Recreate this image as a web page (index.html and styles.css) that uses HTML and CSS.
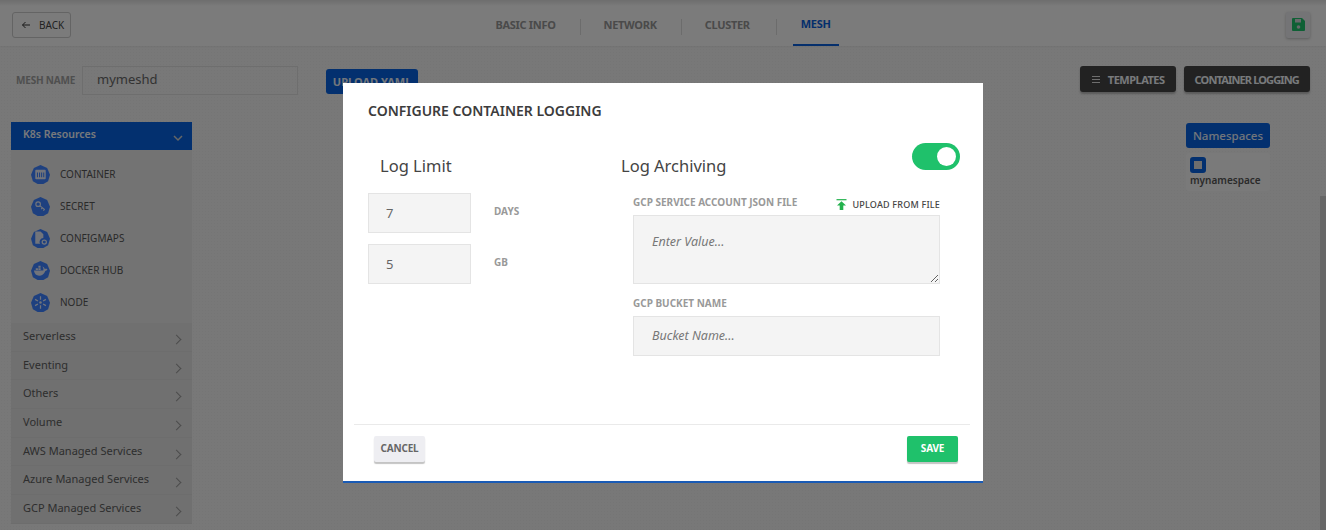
FILE: index.html
```html
<!DOCTYPE html>
<html lang="en">
<head>
    <meta charset="UTF-8">
    <meta name="viewport" content="width=device-width, initial-scale=1.0">
    <title>Configure Container Logging</title>
    <link rel="stylesheet" href="styles.css">
</head>
<body>
    <div class="page">
        <header class="topbar">
            <button class="back-btn">
                <svg width="10" height="10" viewBox="0 0 10 10"><path d="M9 5H1.5M4.5 2 1.5 5l3 3" fill="none" stroke="#333" stroke-width="1"/></svg>
                BACK
            </button>
            <nav class="tabs">
                <span class="tab">BASIC INFO</span>
                <span class="tab">NETWORK</span>
                <span class="tab">CLUSTER</span>
                <span class="tab active">MESH</span>
            </nav>
            <button class="save-icon-btn">
                <svg width="13" height="13" viewBox="0 0 13 13"><path d="M1 0h9l3 3v9a1 1 0 0 1-1 1H1a1 1 0 0 1-1-1V1a1 1 0 0 1 1-1z" fill="#1fc16b"/><rect x="3" y="1" width="6" height="3.5" fill="#cfd3d6"/><circle cx="6.5" cy="9" r="1.8" fill="#cfd3d6"/></svg>
            </button>
        </header>

        <div class="toolbar">
            <div class="mesh-name">
                <label>MESH NAME</label>
                <input class="mesh-input" type="text" value="mymeshd">
                <button class="upload-btn">UPLOAD YAML</button>
            </div>
            <div class="toolbar-right">
                <button class="dark-btn templates-btn">
                    <svg width="11" height="9" viewBox="0 0 11 9"><path d="M1 1.5h8M1 4.5h8M1 7.5h8" stroke="#ddd" stroke-width="1"/></svg>
                    TEMPLATES
                </button>
                <button class="dark-btn logging-btn">CONTAINER LOGGING</button>
            </div>
        </div>

        <div class="content">
            <aside class="sidebar">
                <div class="side-head">
                    <span>K8s Resources</span>
                    <svg width="10" height="7" viewBox="0 0 10 7"><path d="M1 1l4 4 4-4" fill="none" stroke="#ccc" stroke-width="1.5"/></svg>
                </div>
                <ul class="res-list">
                    <li>
                        <svg class="res-icon" viewBox="0 0 20 20"><path class="hept" d="M10 0l7 3.2 3 7-2 6.8-5 3H7l-5-3-2-6.8 3-7z"/><rect x="4.500" y="5" width="11" height="10" rx="1" fill="#e4e9f5"/><path d="M6.800 8v5M9 8v5M11.200 8v5M13.400 8v5" stroke="#3c80ff" stroke-width="1.100"/></svg>
                        CONTAINER
                    </li>
                    <li>
                        <svg class="res-icon" viewBox="0 0 20 20"><path class="hept" d="M10 0l7 3.2 3 7-2 6.8-5 3H7l-5-3-2-6.8 3-7z"/><circle cx="7.500" cy="7.500" r="2.400" fill="none" stroke="#e4e9f5" stroke-width="1.200"/><path d="M9.500 9.300l5 4M12 11.300l-1.200 1.400M14.200 13l-1.200 1.400" stroke="#e4e9f5" stroke-width="1.200"/></svg>
                        SECRET
                    </li>
                    <li>
                        <svg class="res-icon" viewBox="0 0 20 20"><path class="hept" d="M10 0l7 3.2 3 7-2 6.8-5 3H7l-5-3-2-6.8 3-7z"/><path d="M4.500 2.500h5.500l3 3v4a4 4 0 0 0-3.500 6H4.500z" fill="#e4e9f5"/><circle cx="14" cy="13.800" r="2.200" fill="none" stroke="#e4e9f5" stroke-width="1.300"/></svg>
                        CONFIGMAPS
                    </li>
                    <li>
                        <svg class="res-icon" viewBox="0 0 20 20"><path class="hept" d="M10 0l7 3.2 3 7-2 6.8-5 3H7l-5-3-2-6.8 3-7z"/><path d="M3 10h10c.3-1.500 0-3-1-4.200 1.300.4 2.200 1.500 2.500 2.700.8-.4 2-.4 2.800.1-.5 1.200-1.400 1.700-2.300 1.800-1 3-3.500 5-6.500 5-2.800 0-4.800-1.600-5.500-5.400z" fill="#e4e9f5"/><path d="M5 7.500h2.300v2H5zM7.800 7.500h2.300v2H7.800zM7.800 5h2.300v2H7.800z" fill="#e4e9f5"/></svg>
                        DOCKER HUB
                    </li>
                    <li>
                        <svg class="res-icon" viewBox="0 0 20 20"><path class="hept" d="M10 0l7 3.2 3 7-2 6.800-5 3H7l-5-3-2-6.800 3-7z"/><circle cx="10" cy="10" r="1.300" fill="#e4e9f5"/><path d="M10 3.500v3.500M10 13v3.500M4.300 6.700l3 1.800M12.700 11.500l3 1.800M4.300 13.300l3-1.800M12.700 8.500l3-1.800" stroke="#e4e9f5" stroke-width="1.300"/></svg>
                        NODE
                    </li>
                </ul>
                <ul class="group-list">
                    <li>Serverless</li>
                    <li>Eventing</li>
                    <li>Others</li>
                    <li>Volume</li>
                    <li>AWS Managed Services</li>
                    <li>Azure Managed Services</li>
                    <li>GCP Managed Services</li>
                </ul>
            </aside>

            <div class="namespaces">
                <div class="ns-head">Namespaces</div>
                <div class="ns-card">
                    <span class="ns-box"></span>
                    <span>mynamespace</span>
                </div>
            </div>
        </div>
        <div class="scroll-strip"></div>
    </div>

    <div class="overlay">
        <div class="modal">
            <h3 class="modal-title">CONFIGURE CONTAINER LOGGING</h3>
            <div class="modal-body">
                <section class="log-limit">
                    <h4 class="sub-title">Log Limit</h4>
                    <div class="limit-row">
                        <input class="field limit-field" type="text" value="7">
                        <span class="field-label">DAYS</span>
                    </div>
                    <div class="limit-row">
                        <input class="field limit-field" type="text" value="5">
                        <span class="field-label">GB</span>
                    </div>
                </section>
                <section class="log-archive">
                    <div class="archive-head">
                        <h4 class="sub-title">Log Archiving</h4>
                        <span class="toggle"><span class="knob"></span></span>
                    </div>
                    <div class="archive-fields">
                        <div class="label-row">
                            <span class="field-label">GCP SERVICE ACCOUNT JSON FILE</span>
                            <span class="upload-link">
                                <svg width="11" height="11" viewBox="0 0 11 11"><path d="M.5 .7h10" stroke="#22b14c" stroke-width="1.200"/><path d="M5.500 2.200 10 6.500H7.300V11H3.700V6.500H1z" fill="#22b14c"/></svg>
                                UPLOAD FROM FILE
                            </span>
                        </div>
                        <textarea class="field json-area" placeholder="Enter Value..."></textarea>
                        <div class="field-label bucket-label">GCP BUCKET NAME</div>
                        <input class="field bucket-field" type="text" placeholder="Bucket Name...">
                    </div>
                </section>
            </div>
            <div class="modal-footer">
                <button class="cancel-btn">CANCEL</button>
                <button class="save-btn">SAVE</button>
            </div>
        </div>
    </div>
</body>
</html>
```

FILE: styles.css
```css
* {
    box-sizing: border-box;
}
html, body {
    margin: 0;
    height: 100%;
    overflow: hidden;
}
body {
    font-family: "Noto Sans", "Open Sans", sans-serif;
    background-color: #f0f0f0;
    background-image: radial-gradient(#eaeaea 1px, transparent 1px);
    background-size: 3px 3px;
}
button {
    font-family: inherit;
    cursor: pointer;
}
ul {
    list-style: none;
    margin: 0;
    padding: 0;
}

/* page behind the modal */
.topbar {
    height: 46px;
    display: flex;
    align-items: center;
    justify-content: space-between;
    padding: 3px 16px 0 12px;
    background: linear-gradient(#dcdcdc 0, #f6f6f6 6px);
    box-shadow: 0 1px 2px rgba(0, 0, 0, 0.05);
}
.back-btn {
    width: 59px;
    height: 26px;
    display: flex;
    align-items: center;
    gap: 8px;
    padding: 0 0 0 8px;
    font-size: 10px;
    color: #444;
    background: #f6f6f6;
    border: 1px solid #c8c8c8;
    border-radius: 3px;
}
.tabs {
    display: flex;
    height: 43px;
    margin-right: 47px;
    align-items: stretch;
}
.tab {
    padding: 0 24px;
    font-size: 11px;
    font-weight: 700;
    letter-spacing: -0.3px;
    color: #949494;
    display: flex;
    align-items: center;
    position: relative;
}
.tab:not(.active)::after {
    content: "";
    position: absolute;
    right: -1px;
    top: 16px;
    height: 16px;
    border-right: 1px solid #d8d8d8;
}
.tab:nth-child(3)::after {
    right: -3px;
}
.tab.active {
    color: #0a5fd8;
    padding: 0 8px;
    margin-left: 19px;
    border-bottom: 2px solid #0a5fd8;
}
.save-icon-btn {
    width: 24px;
    height: 26px;
    padding: 0;
    display: flex;
    align-items: center;
    justify-content: center;
    background: #e8e8ec;
    border: none;
    border-radius: 2px;
    box-shadow: 0 1px 3px rgba(0, 0, 0, 0.25);
}
.toolbar {
    display: flex;
    justify-content: space-between;
    padding: 20px 16px 0;
    height: 76px;
}
.mesh-name {
    display: flex;
    align-items: flex-start;
}
.mesh-name label {
    font-size: 10px;
    font-weight: 700;
    letter-spacing: -0.2px;
    color: #9e9e9e;
    margin: 7px 7px 0 0;
}
.mesh-input {
    width: 216px;
    height: 29px;
    padding: 0 14px 3px;
    font-family: inherit;
    font-size: 13px;
    color: #666;
    background: transparent;
    border: 1px solid #dcdcdc;
}
.upload-btn {
    width: 92px;
    height: 25px;
    margin: 3px 0 0 28px;
    font-size: 11px;
    font-weight: 700;
    color: #e4ecf6;
    background: #0660de;
    border: none;
    border-radius: 3px;
}
.toolbar-right {
    display: flex;
    gap: 8px;
}
.dark-btn {
    height: 26px;
    padding: 0 11px;
    display: flex;
    align-items: center;
    gap: 6px;
    font-size: 11px;
    font-weight: 700;
    color: #f0f4f8;
    background: #444;
    border: none;
    border-radius: 3px;
    box-shadow: 0 2px 2px rgba(0, 0, 0, 0.25);
}
.templates-btn {
    letter-spacing: -0.5px;
}
.logging-btn {
    letter-spacing: -0.85px;
}
.content {
    display: flex;
    justify-content: space-between;
    padding: 0 56px 0 11px;
}
.sidebar {
    width: 181px;
    background: #e0e0e0;
}
.side-head {
    height: 28px;
    display: flex;
    align-items: center;
    justify-content: space-between;
    padding: 0 9px 0 12px;
    font-size: 10.5px;
    font-weight: 600;
    color: #eef2f8;
    background: #0660de;
}
.side-head span {
    margin-bottom: 5px;
}
.side-head svg {
    margin-top: 5px;
}
.res-list {
    padding: 8px 0 2px 20px;
    background: #e6e6e6;
    height: 173px;
}
.res-list li {
    height: 32px;
    display: flex;
    align-items: center;
    gap: 10px;
    font-size: 10px;
    color: #555;
}
.res-icon {
    width: 19px;
    height: 19px;
}
.hept {
    fill: #3c80ff;
}
.group-list li {
    height: 28.7px;
    padding: 5px 0 0 12px;
    font-size: 11px;
    color: #5c5c5c;
    border-bottom: 1px solid #dadada;
    position: relative;
}
.group-list li::after {
    content: "";
    position: absolute;
    right: 12px;
    top: 13px;
    width: 6px;
    height: 6px;
    border-top: 1.5px solid #999;
    border-right: 1.5px solid #999;
    transform: rotate(45deg);
}
.namespaces {
    width: 84px;
    margin-top: 1px;
}
.ns-head {
    height: 25px;
    display: flex;
    align-items: center;
    justify-content: center;
    font-size: 11.5px;
    font-weight: 500;
    color: #e4ecf6;
    background: #0660de;
    border-radius: 3px;
}
.ns-card {
    height: 38px;
    margin-top: 5px;
    padding: 4px 4px 0;
    display: flex;
    flex-direction: column;
    font-size: 10px;
    font-weight: 600;
    color: #555;
    background: #f5f5f5;
    border-radius: 3px;
}
.ns-box {
    width: 16px;
    height: 16px;
    border: 4px solid #0660de;
    border-radius: 3px;
    background: #ddd;
}
.scroll-strip {
    position: fixed;
    top: 196px;
    right: 0;
    bottom: 0;
    width: 6px;
    background: #cfcfcf;
}

/* modal */
.overlay {
    position: fixed;
    inset: 0;
    background: rgba(0, 0, 0, 0.5);
}
.modal {
    width: 640px;
    height: 400px;
    margin: 83px 0 0 343px;
    padding-top: 19px;
    display: flex;
    flex-direction: column;
    background: #fff;
    border-bottom: 2px solid #1a5bb5;
}
.modal-title {
    margin: 0 0 0 25px;
    font-size: 14px;
    line-height: 18px;
    font-weight: 600;
    color: #3c3c3c;
}
.modal-body {
    flex: 1;
    display: flex;
    padding-left: 25px;
}
.log-limit {
    width: 253px;
}
.sub-title {
    margin: 0;
    font-size: 16.5px;
    line-height: 24px;
    font-weight: 400;
    color: #444;
}
.log-limit .sub-title {
    margin: 34px 0 15px 12px;
}
.limit-row {
    display: flex;
    align-items: center;
    gap: 23px;
    margin-bottom: 11px;
}
.field {
    display: block;
    font-family: inherit;
    background: #f4f4f4;
    border: 1px solid #e4e4e4;
    outline: none;
}
.field::placeholder {
    font-style: italic;
    color: #777;
    opacity: 1;
}
.limit-field {
    width: 103px;
    height: 40px;
    padding: 0 17px;
    font-size: 13px;
    color: #666;
}
.field-label {
    font-size: 10px;
    font-weight: 700;
    color: #999;
}
.limit-row .field-label {
    margin-top: -4px;
}
.log-archive {
    width: 339px;
}
.archive-head {
    display: flex;
    justify-content: space-between;
    align-items: flex-start;
    margin-top: 24px;
}
.archive-head .sub-title {
    margin-top: 10px;
}
.toggle {
    width: 48px;
    height: 27px;
    margin-top: -1px;
    padding: 4px 4px 0 0;
    display: flex;
    justify-content: flex-end;
    background: #1fc16b;
    border-radius: 14px;
}
.knob {
    width: 19px;
    height: 19px;
    background: #fff;
    border-radius: 50%;
}
.archive-fields {
    margin: 10px 0 0 12px;
    width: 307px;
}
.label-row {
    height: 27px;
    display: flex;
    justify-content: space-between;
    align-items: center;
}
.upload-link {
    display: flex;
    align-items: center;
    gap: 5px;
    margin-top: 6px;
    font-size: 9px;
    font-weight: 500;
    letter-spacing: 0.2px;
    color: #444;
}
.json-area {
    width: 307px;
    height: 69px;
    padding: 17px 18px;
    font-size: 12.5px;
    resize: vertical;
}
.bucket-label {
    margin-top: 12px;
    line-height: 14px;
}
.bucket-field {
    width: 307px;
    height: 40px;
    margin-top: 6px;
    padding: 0 18px 1px;
    font-size: 12.5px;
}
.modal-footer {
    height: 57px;
    margin: 0 13px 0 11px;
    padding: 11px 12px 0 20px;
    display: flex;
    justify-content: space-between;
    align-items: flex-start;
    border-top: 1px solid #eaeaea;
}
.cancel-btn, .save-btn {
    width: 51px;
    height: 26px;
    padding: 0 0 3px;
    font-size: 10px;
    font-weight: 700;
    letter-spacing: -0.2px;
    border: none;
    border-radius: 2px;
}
.cancel-btn {
    color: #666;
    background: #eeeef2;
    box-shadow: 0 2px 1px #c4c4c4;
}
.save-btn {
    color: #fff;
    background: #1fc16b;
    box-shadow: 0 2px 1px #c4c4c4;
}
```
